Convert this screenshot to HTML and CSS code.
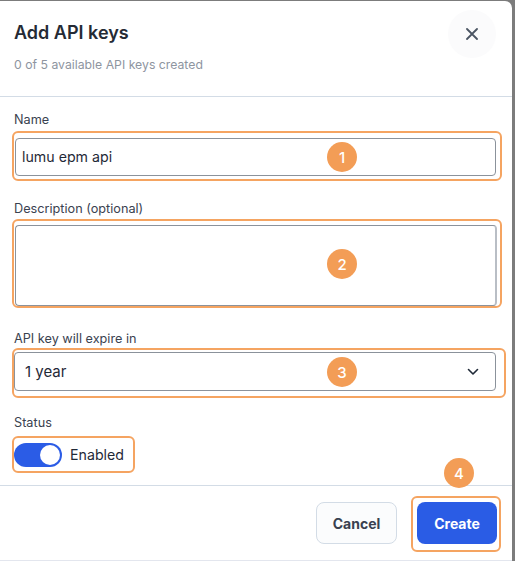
FILE: index.html
```html
<!DOCTYPE html>
<html lang="en">
<head>
<meta charset="utf-8">
<title>Add API keys</title>
<link rel="stylesheet" href="styles.css">
</head>
<body>
<div class="modal">
  <header class="header">
    <div class="heading">
      <h1 class="title">Add API keys</h1>
      <p class="subtitle">0 of 5 available API keys created</p>
    </div>
    <button class="close" type="button" aria-label="Close">
      <svg width="12" height="12" viewBox="0 0 12 12"><path d="M1 1L11 11M11 1L1 11" stroke="#4b5563" stroke-width="1.8" stroke-linecap="round" fill="none"/></svg>
    </button>
  </header>

  <div class="body">
    <label class="label label-name">Name</label>
    <div class="mark mark-name">
      <div class="input">lumu epm api</div>
    </div>

    <label class="label label-desc">Description (optional)</label>
    <div class="mark mark-desc">
      <div class="textarea"></div>
    </div>

    <label class="label label-exp">API key will expire in</label>
    <div class="mark mark-exp">
      <div class="select">
        <span>1 year</span>
        <svg width="12" height="8" viewBox="0 0 12 8"><path d="M1.5 1.5L6 6L10.5 1.5" stroke="#1f2937" stroke-width="1.6" stroke-linecap="round" stroke-linejoin="round" fill="none"/></svg>
      </div>
    </div>

    <label class="label label-status">Status</label>
    <div class="mark mark-status">
      <span class="toggle"><span class="knob"></span></span>
      <span class="toggle-text">Enabled</span>
    </div>
  </div>

  <footer class="footer">
    <button class="btn btn-cancel" type="button">Cancel</button>
    <div class="mark mark-create">
      <button class="btn btn-create" type="button">Create</button>
    </div>
  </footer>

  <span class="step step-1">1</span>
  <span class="step step-2">2</span>
  <span class="step step-3">3</span>
  <span class="step step-4">4</span>
</div>
</body>
</html>
```

FILE: styles.css
```css
* { box-sizing: border-box; }
html, body { margin: 0; padding: 0; }
body {
  background: #7c7c7c;
  font-family: Inter, "Noto Sans", "Liberation Sans", sans-serif;
  color: #1f2937;
  width: 515px;
  height: 561px;
  overflow: hidden;
}
.modal {
  position: relative;
  width: 512px;
  height: 560px;
  margin-top: 1px;
  background: #ffffff;
  border-top-right-radius: 7px;
  border-bottom: 1px solid #e3e6ee;
  display: flex;
  flex-direction: column;
}
.header {
  height: 96px;
  flex: none;
  border-bottom: 1px solid #d3dce6;
  display: flex;
  justify-content: space-between;
  align-items: flex-start;
  padding: 9px 16px 0 14px;
}
.heading { margin-top: 11px; }
.title {
  margin: 0;
  font-size: 18px;
  line-height: 24px;
  font-weight: 600;
  color: #252b35;
}
.subtitle {
  margin: 12px 0 0;
  font-size: 12.25px;
  line-height: 16px;
  color: #8e959f;
}
.close {
  width: 48px;
  height: 48px;
  border: none;
  border-radius: 50%;
  background: #fbfbfc;
  display: flex;
  align-items: center;
  justify-content: center;
  padding: 0;
}
.body {
  flex: none;
  height: 388px;
  display: flex;
  flex-direction: column;
  align-items: flex-start;
  padding: 0 0 0 12px;
}
.label {
  display: block;
  padding-left: 2px;
  font-size: 12.7px;
  line-height: 16px;
  color: #3a4250;
}
.label-name { margin-top: 15px; }
.label-desc { margin-top: 20px; }
.label-exp { margin-top: 23px; }
.label-status { margin-top: 17px; }

.mark {
  border: 2px solid #f5a461;
  border-radius: 6px;
}
.mark-name {
  margin-top: 3px;
  width: 490px;
  height: 50px;
  padding: 5px 4px 3px 1px;
}
.mark-desc {
  margin-top: 2px;
  width: 490px;
  height: 89px;
  padding: 4px 3px 0 1px;
}
.mark-exp {
  margin-top: 1px;
  width: 494px;
  height: 50px;
  padding: 2px 8px 5px 0;
}
.mark-status {
  margin-top: 5px;
  width: 123px;
  height: 37px;
  padding: 5px 0 0 0;
  display: flex;
  align-items: flex-start;
}
.input, .textarea, .select {
  border: 1px solid #8b929b;
  border-radius: 4px;
  background: #fff;
}
.input {
  height: 38px;
  font-size: 14.2px;
  line-height: 36px;
  padding-left: 6px;
  color: #1f2937;
}
.textarea {
  height: 81px;
  border-right: 2px solid #b9bec5;
}
.select {
  height: 39px;
  display: flex;
  align-items: center;
  justify-content: space-between;
  padding: 0 16px 0 10px;
  font-size: 15px;
  color: #1f2937;
}
.toggle {
  width: 48px;
  height: 24px;
  border-radius: 12px;
  background: #2b5ce6;
  display: flex;
  align-items: center;
  justify-content: flex-end;
  padding-right: 2px;
}
.knob {
  width: 20px;
  height: 20px;
  border-radius: 50%;
  background: #fff;
}
.toggle-text {
  margin-left: 8px;
  font-size: 14.2px;
  line-height: 24px;
  color: #1f2937;
}
.footer {
  flex: 1;
  display: flex;
  justify-content: flex-end;
  align-items: flex-start;
  border-top: 1px solid #d3dce6;
  padding: 10px 11px 0 0;
}
.btn {
  height: 42px;
  border-radius: 8px;
  font-family: inherit;
  font-size: 14px;
  font-weight: 700;
  padding: 0;
}
.btn-cancel {
  margin-top: 6px;
  margin-right: 14px;
  width: 81px;
  border: 1px solid #d3dce6;
  background: #fbfcfd;
  color: #394150;
}
.mark-create {
  width: 90px;
  height: 56px;
  padding: 4px 2px 0 4px;
}
.btn-create {
  width: 80px;
  border: none;
  background: #2a5ce5;
  color: #ffffff;
}
.step {
  position: absolute;
  width: 30px;
  height: 30px;
  border-radius: 50%;
  background: #f39d56;
  color: #fff;
  font-size: 15px;
  font-weight: 500;
  display: flex;
  align-items: center;
  justify-content: center;
}
.step-1 { left: 327px; top: 141px; }
.step-2 { left: 327px; top: 248px; }
.step-3 { left: 327px; top: 356px; }
.step-4 { left: 444px; top: 457px; }
```
